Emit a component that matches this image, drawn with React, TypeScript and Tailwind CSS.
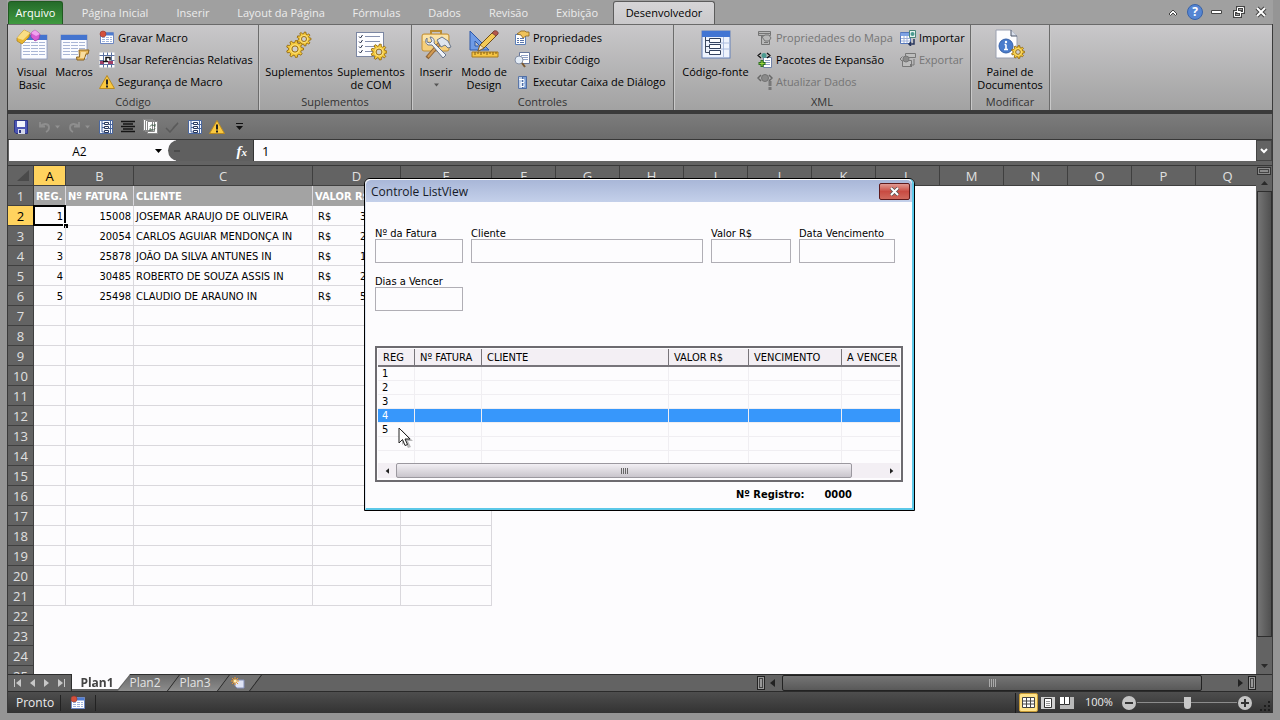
import React from 'react';

interface IconProps {
    className?: string;
}

interface SheetRow {
    reg: string;
    fatura: string;
    cliente: string;
    valor: string;
}

const tabs = [
    { name: 'Página Inicial', width: 'w-24' },
    { name: 'Inserir', width: 'w-[60px]' },
    { name: 'Layout da Página', width: 'w-[116px]' },
    { name: 'Fórmulas', width: 'w-[75px]' },
    { name: 'Dados', width: 'w-[61px]' },
    { name: 'Revisão', width: 'w-[67px]' },
    { name: 'Exibição', width: 'w-[70px]' },
];

const rows: SheetRow[] = [
    { reg: '1', fatura: '15008', cliente: 'JOSEMAR ARAUJO DE OLIVEIRA', valor: '3' },
    { reg: '2', fatura: '20054', cliente: 'CARLOS AGUIAR MENDONÇA IN', valor: '2' },
    { reg: '3', fatura: '25878', cliente: 'JOÃO DA SILVA ANTUNES IN', valor: '1' },
    { reg: '4', fatura: '30485', cliente: 'ROBERTO DE SOUZA ASSIS IN', valor: '2' },
    { reg: '5', fatura: '25498', cliente: 'CLAUDIO DE ARAUNO IN', valor: '5' },
];

const columns = 'ABCDEFGHIJKLMNOPQ'.split('');
const emptyRows = Array.from({ length: 19 }, (_, i) => i + 7);
const listColumns = ['REG', 'Nº FATURA', 'CLIENTE', 'VALOR R$', 'VENCIMENTO', 'A VENCER'];
const listRows = ['1', '2', '3', '4', '5', '', ''];

/* ---------- icons ---------- */

const gearPoints = (cx: number, cy: number, r: number, teeth: number) => {
    const points: string[] = [];
    for (let i = 0; i < teeth; i++) {
        [[-0.3, 0.76], [-0.17, 1], [0.17, 1], [0.3, 0.76]].forEach(([offset, scale]) => {
            const angle = ((i + offset) / teeth) * Math.PI * 2;
            points.push(`${(cx + Math.cos(angle) * r * scale).toFixed(2)},${(cy + Math.sin(angle) * r * scale).toFixed(2)}`);
        });
    }
    return points.join(' ');
};

const Gear = ({ cx, cy, r }: { cx: number; cy: number; r: number }) => (
    <g>
        <polygon points={gearPoints(cx, cy, r, 9)} fill="#f6cb3c" stroke="#94690f" strokeWidth=".9" />
        <circle cx={cx} cy={cy} r={r * 0.5} fill="none" stroke="#fbe287" strokeWidth="1" />
        <circle cx={cx} cy={cy} r={r * 0.36} fill="#d0cfce" stroke="#94690f" strokeWidth=".9" />
    </g>
);

const Window = ({ x, y }: { x: number; y: number }) => (
    <g>
        <rect x={x} y={y} width="26" height="24" fill="#fbfcff" stroke="#8495bd" strokeWidth=".8" />
        <rect x={x} y={y} width="26" height="5" fill="#4474cf" />
        <path d={`M${x + 2} ${y + 7.5}h22M${x + 2} ${y + 10.5}h22M${x + 2} ${y + 13.5}h22M${x + 2} ${y + 16.5}h22M${x + 2} ${y + 19.5}h22`} stroke="#a9b6d6" />
        <path d={`M${x + 9.5} ${y + 6}v16M${x + 17.5} ${y + 6}v16`} stroke="#fbfcff" />
    </g>
);

const VisualBasicIcon = () => (
    <svg width="32" height="32" viewBox="0 0 32 32">
        <Window x={5} y={6} />
        <path d="M1 9 8 1l6 3-1 4-7 7-5-3z" fill="#e8b630" stroke="#a97c18" strokeWidth=".7" />
        <path d="M1 9 8 1l6 3-7 7z" fill="#f9de83" />
        <path d="m15 4 4-3 5 4-1 5-4 2-4-4z" fill="#d65bd4" stroke="#963a9b" strokeWidth=".7" />
        <path d="m15 4 4-3 5 4-4 2z" fill="#f0a2ee" />
    </svg>
);

const MacrosIcon = () => (
    <svg width="32" height="32" viewBox="0 0 32 32">
        <Window x={3} y={6} />
        <path d="M21 21h10l-1 4h-2l-2 6h-7l-.5-3h3z" fill="#e7b85c" stroke="#8d6420" />
        <path d="M23 23h5l-2 6h-4" fill="#f8dda0" />
    </svg>
);

const GearsIcon = () => (
    <svg width="32" height="32" viewBox="0 0 32 32">
        <Gear cx={21} cy={10} r={7} />
        <Gear cx={12} cy={20} r={8.5} />
    </svg>
);

const ComIcon = () => (
    <svg width="32" height="32" viewBox="0 0 32 32">
        <rect x="1.500" y="3.500" width="27" height="24" fill="#fdfdff" stroke="#7b86a2" />
        {[7, 12, 17, 22].map((y) => (
            <g key={y}>
                <path d={`M4 ${y + 0.5}l1.500 1.500 2-3`} fill="none" stroke="#26304a" />
                <path d={`M10 ${y + 0.5}h15`} stroke="#8792b0" />
            </g>
        ))}
        <Gear cx={24} cy={23} r={8} />
    </svg>
);

const ToolboxIcon = () => (
    <svg width="32" height="32" viewBox="0 0 32 32">
        <path d="M11 5V2h10v3" fill="none" stroke="#b98c34" strokeWidth="2" />
        <rect x="2" y="5" width="27" height="17" rx="2" fill="#f6cf7b" stroke="#bf8f3a" />
        <rect x="3" y="6" width="25" height="6" fill="#fbe3a8" />
        <path d="m20 14-13 15" stroke="#8b6236" strokeWidth="4" />
        <path d="m19 15-11 13" stroke="#d29a52" strokeWidth="2" />
        <path d="m17 11 5-3 6 4 3 6-3 1-3-3-4 2z" fill="#dfe5ee" stroke="#6c7789" />
        <path d="M7 9c-2 2-2 5 1 7h4l11 13 3-3-12-12c1-3-1-6-4-6l2 4-2 2-3-1z" fill="#eef2f8" stroke="#68758b" />
    </svg>
);

const DesignIcon = () => (
    <svg width="32" height="32" viewBox="0 0 32 32">
        <path d="M2 2v19h19zM7 12l5 5H7z" fill="#6f9be6" fillRule="evenodd" stroke="#2f58a8" />
        <path d="M4 23h26v5H4z" fill="#f6c544" stroke="#a87a1c" />
        <path d="M7 23v3M10 23v2M13 23v3M16 23v2M19 23v3M22 23v2M25 23v3M28 23v2" stroke="#805a10" />
        <path d="m10 22 2-6L26 2l4 3-14 14z" fill="#f4ca57" stroke="#6f4c17" />
        <path d="m24 4 2-2c2-1 5 1 4 3l-2 2z" fill="#b5564d" stroke="#6d4038" strokeWidth=".8" />
        <path d="m10 22 2-6 4 3z" fill="#f7e6c8" stroke="#6f4c17" strokeWidth=".6" />
    </svg>
);

const SourceIcon = () => (
    <svg width="32" height="32" viewBox="0 0 32 32">
        <rect x="2" y="2" width="28" height="27" fill="#eef3fd" stroke="#6480b8" />
        <rect x="2" y="2" width="28" height="6" fill="#4275d3" />
        <path d="M23.500 8v20M30 14h-9M30 20h-9" stroke="#aebedf" />
        <path d="M5.500 8v15.500H9M5.500 11.500H9M5.500 17.500H9" fill="none" stroke="#3c4960" />
        <path d="M9.500 9.500h11v4h-11zM9.500 15.500h11v4h-11zM9.500 21.500h11v4h-11z" fill="#fff" stroke="#34425e" />
    </svg>
);

const DocumentPanelIcon = () => (
    <svg width="32" height="32" viewBox="0 0 32 32">
        <path d="M2 1h15l6 6v22H2z" fill="#fdfdff" stroke="#9aa0b0" />
        <path d="M17 1v6h6" fill="#d8deea" stroke="#4b5568" />
        <circle cx="12" cy="17" r="7" fill="#4a7ccc" stroke="#3561a9" />
        <path d="M12 15.500v5M10.500 15.500H12M10 20.500h4" stroke="#fff" strokeWidth="1.600" />
        <circle cx="12" cy="13" r="1.200" fill="#fff" />
        <Gear cx={24} cy={23} r={6.5} />
    </svg>
);

const RecordIcon = () => (
    <svg width="16" height="16" viewBox="0 0 16 16">
        <path d="M1.500 2.500h13v11h-13z" fill="#fff" stroke="#6d87c2" />
        <path d="M2 3h12v2.500H2z" fill="#4d7bd0" />
        <path d="M3 7.500h10M3 9.500h10M3 11.500h10" stroke="#9fb3dd" strokeDasharray="3 1" />
        <circle cx="4" cy="4" r="3" fill="#d4503c" stroke="#93382c" strokeWidth=".6" />
    </svg>
);

const RelativeIcon = () => (
    <svg width="16" height="16" viewBox="0 0 16 16">
        <path d="M.5.5h15v15H.5z" fill="#fff" />
        <path d="M.5 3.500h15M.5 12.500h15M4.500.5v15M8.500.5v3M12.500.5v15M8.500 12.500v3M.5 8.500h4M12.500 8.500h3" stroke="#5a70a0" />
        <path d="M1 9h4v3H1zM9 9h5v3H9z" fill="#a04068" />
        <path d="M4 9.500h5M7 9V5.500h4v3" fill="none" stroke="#111" strokeWidth="1.500" />
    </svg>
);

const WarningIcon = () => (
    <svg width="16" height="16" viewBox="0 0 16 16">
        <path d="M8 1.500 15.500 14.500H.5z" fill="#fbc93f" stroke="#b98a22" strokeLinejoin="round" />
        <path d="M8 5.500v5" stroke="#222" strokeWidth="2" />
        <path d="M7 11.500h2v2H7z" fill="#222" />
    </svg>
);

const PropertiesIcon = () => (
    <svg width="16" height="16" viewBox="0 0 16 16">
        <path d="M1.500 4.500h10v10h-10z" fill="#fff" stroke="#5b7fb8" />
        <path d="M3 8.500h2M6 8.500h4M3 10.500h2M6 10.500h4M3 12.500h2M6 12.500h4" stroke="#5b76ab" />
        <path d="m3 4 4-3h4l1 1h3v4h-3l-3 2-2-3z" fill="#efc25a" stroke="#8b6520" strokeWidth=".8" />
    </svg>
);

const ViewCodeIcon = () => (
    <svg width="16" height="16" viewBox="0 0 16 16">
        <path d="M5.500.5h10v11h-10z" fill="#fff" stroke="#68789c" />
        <path d="M7 3.500h7M7 5.500h7M9 7.500h5" stroke="#8fa0c6" />
        <circle cx="5" cy="8" r="4" fill="#e4edf8" stroke="#8690a4" />
        <path d="m8 11 3 4" stroke="#7c5a31" strokeWidth="2" />
    </svg>
);

const RunDialogIcon = () => (
    <svg width="16" height="16" viewBox="0 0 16 16">
        <path d="M4.500 2.500h8v12h-8z" fill="#bfd0ea" stroke="#5a76a8" />
        <path d="M8.500 2.500h4v12h-4z" fill="#7fa0d4" stroke="#4e6da4" />
        <path d="M5 5.500h5v3H7v4h3v-3" fill="none" stroke="#fff" />
    </svg>
);

const MapPropertiesIcon = () => (
    <svg width="16" height="16" viewBox="0 0 16 16" fill="#b8b8b8" stroke="#757575">
        <path d="M1.500 1.500h12v4h-12zM4.500 5.500h8v9h-8z" />
        <path d="m5 7 3-2h4l2 3-2 3H8zM7 12.500h4M1.500 3.500h12" />
    </svg>
);

const ExpansionIcon = () => (
    <svg width="16" height="16" viewBox="0 0 16 16">
        <path d="M6.500 5.500h8v10h-8z" fill="#fff" stroke="#7182a8" />
        <path d="M8 8.500h5M8 10.500h5M8 12.500h5" stroke="#90a0c4" />
        <path d="M4 1 1 3.500 4 6M10 1l3 2.500L10 6" fill="none" stroke="#111" strokeWidth="1.200" />
        <circle cx="7" cy="3.500" r="2.500" fill="#4c9a90" />
        <path d="M5 8v7M1.500 11.500h7" stroke="#2d7022" strokeWidth="3" />
        <path d="M5 9v5M2.500 11.500h5" stroke="#9ed83f" />
    </svg>
);

const RefreshIcon = () => (
    <svg width="16" height="16" viewBox="0 0 16 16">
        <path d="M4 1 1 4l3 3M12 1l3 3-3 3" fill="none" stroke="#686868" strokeWidth="1.500" />
        <circle cx="8" cy="4" r="3.500" fill="#8a8a8a" stroke="#727272" />
        <path d="M13 7v5M13 13v3" stroke="#777" strokeWidth="3" />
    </svg>
);

const ImportIcon = () => (
    <svg width="16" height="16" viewBox="0 0 16 16">
        <path d="M.5 2.500h10v11H.5z" fill="#fff" stroke="#5577bb" />
        <path d="M.5 3h10v3H.5z" fill="#7ea3e4" />
        <path d="M1 8.500h9M1 11h9M4 6v7M7 6v7" stroke="#9eb1da" />
        <path d="M9.500.5h6v7h-6z" fill="#e8f4f0" stroke="#4a8578" />
        <circle cx="12.500" cy="4" r="2" fill="#4c9a90" />
        <path d="M14 9v5H9m2-2-2 2 2 2" fill="none" stroke="#26355c" strokeWidth="1.500" />
    </svg>
);

const ExportIcon = () => (
    <svg width="16" height="16" viewBox="0 0 16 16" fill="#bdbdbd" stroke="#777">
        <path d="M5.500 1.500h10v4h-10zM2.500 8.500h9v6h-9z" />
        <circle cx="6" cy="7" r="3" fill="#8a8a8a" />
        <path d="M2.500 4.500 0 7l2.500 2.500M14 7v6h-4m2-2-2 2 2 2" fill="none" />
    </svg>
);

const StructureIcon = () => (
    <svg width="14" height="14" viewBox="0 0 14 14">
        <path d="M.5.5h13v13H.5z" fill="#f4f7ff" stroke="#4a679e" />
        <path d="M3 1v11h3M3 3.500h3M3 7.500h3M11.500 1v12M10 4.500h3M10 8.500h3" fill="none" stroke="#4a679e" />
        <path d="M5.500 2.500h4v2h-4zM5.500 6.500h4v2h-4zM5.500 10.500h4v2h-4z" fill="#fff" stroke="#26365c" />
    </svg>
);

const SaveIcon = () => (
    <svg width="14" height="14" viewBox="0 0 14 14">
        <path d="M.5.5h13v13H2l-1.500-1.500z" fill="#4c56b4" stroke="#2e3684" />
        <path d="M3 1h8v6H3z" fill="#f2f4fc" />
        <path d="M4 9h7v5H4z" fill="#d5d9ea" />
        <path d="M5 10h2v3H5z" fill="#2e3684" />
    </svg>
);

const UndoIcon = ({ className }: IconProps) => (
    <svg width="13" height="12" viewBox="0 0 13 12" className={className}>
        <path d="M2 1v4.500h5M2 5.500C5 2 11 2 11 6.500c0 2-1 3.500-3 4.500" fill="none" stroke="#8e8e8e" strokeWidth="1.800" />
    </svg>
);

const Caret = ({ className = 'fill-[#222]' }: IconProps) => (
    <svg width="7" height="4" viewBox="0 0 7 4" className={className}>
        <path d="M0 0h7L3.500 4z" />
    </svg>
);

const Arrow = ({ className }: IconProps) => (
    <svg width="6" height="8" viewBox="0 0 6 8" className={className}>
        <path d="M0 0v8l5-4z" />
    </svg>
);

const Cursor = () => (
    <svg width="16" height="22" viewBox="0 0 16 22" className="absolute left-[21px] top-[79px]">
        <path d="m4 3 11 11h-5l3 6-3 1-3-6-3 3z" fill="#0004" />
        <path d="M1 1v15l3.500-3.500L7 18.500l2.500-1L7 12h5z" fill="#fff" stroke="#222" />
    </svg>
);

/* ---------- ribbon ---------- */

interface ButtonProps {
    icon: React.ReactNode;
    children: React.ReactNode;
    className?: string;
    disabled?: boolean;
}

const BigButton = ({ icon, children, className }: ButtonProps) => (
    <button className={`flex shrink-0 flex-col items-center pt-1 text-center leading-[13px] ${className}`}>
        <span className="flex h-9 items-start">{icon}</span>
        {children}
    </button>
);

const SmallButton = ({ icon, children, disabled }: ButtonProps) => (
    <button disabled={disabled} className="flex h-[22px] items-center gap-[3px] whitespace-nowrap disabled:text-[#757575]">
        {icon}
        {children}
    </button>
);

const Group = ({ title, className, children }: { title: string; className: string; children: React.ReactNode }) => (
    <section className={`flex shrink-0 flex-col border-r border-[#6c6c6c] shadow-[1px_0_0_#c9c9c9] ${className}`}>
        <div className="flex flex-1 items-start">{children}</div>
        <h2 className="h-[17px] text-center leading-[17px] text-[#333]">{title}</h2>
    </section>
);

const Ribbon = () => (
    <div className="flex h-[86px] shrink-0 overflow-hidden border-t border-[#6a6a6a] bg-linear-to-b from-[#c9c8ca] to-[#a2a2a2]">
        <Group title="Código" className="w-[251px]">
            <BigButton icon={<VisualBasicIcon />} className="w-12">Visual<br />Basic</BigButton>
            <BigButton icon={<MacrosIcon />} className="w-9">Macros</BigButton>
            <div className="pt-0.5 pl-[7px]">
                <SmallButton icon={<RecordIcon />}>Gravar Macro</SmallButton>
                <SmallButton icon={<RelativeIcon />}>Usar Referências Relativas</SmallButton>
                <SmallButton icon={<WarningIcon />}>Segurança de Macro</SmallButton>
            </div>
        </Group>
        <Group title="Suplementos" className="w-[153px]">
            <BigButton icon={<GearsIcon />} className="w-20">Suplementos</BigButton>
            <BigButton icon={<ComIcon />} className="w-16">Suplementos<br />de COM</BigButton>
        </Group>
        <Group title="Controles" className="w-[262px]">
            <BigButton icon={<ToolboxIcon />} className="w-12">
                Inserir
                <span className="flex h-[13px] items-center"><Caret className="w-[5px] fill-[#555]" /></span>
            </BigButton>
            <BigButton icon={<DesignIcon />} className="w-12">Modo de<br />Design</BigButton>
            <div className="pt-0.5 pl-1.5">
                <SmallButton icon={<PropertiesIcon />}>Propriedades</SmallButton>
                <SmallButton icon={<ViewCodeIcon />}>Exibir Código</SmallButton>
                <SmallButton icon={<RunDialogIcon />}>Executar Caixa de Diálogo</SmallButton>
            </div>
        </Group>
        <Group title="XML" className="w-[297px]">
            <BigButton icon={<SourceIcon />} className="w-[83px]">Código-fonte</BigButton>
            <div className="w-[143px] pt-0.5">
                <SmallButton icon={<MapPropertiesIcon />} disabled>Propriedades do Mapa</SmallButton>
                <SmallButton icon={<ExpansionIcon />}>Pacotes de Expansão</SmallButton>
                <SmallButton icon={<RefreshIcon />} disabled>Atualizar Dados</SmallButton>
            </div>
            <div className="pt-0.5">
                <SmallButton icon={<ImportIcon />}>Importar</SmallButton>
                <SmallButton icon={<ExportIcon />} disabled>Exportar</SmallButton>
            </div>
        </Group>
        <Group title="Modificar" className="w-[79px]">
            <BigButton icon={<DocumentPanelIcon />} className="w-[78px]">Painel de<br />Documentos</BigButton>
        </Group>
    </div>
);

const windowButton = 'flex h-full w-[22px] items-center justify-center';

const TabBar = () => (
    <nav className="flex h-6 shrink-0 items-end bg-[#a0a0a0]">
        <button className="ml-px h-[23px] w-[55px] rounded-t-[3px] border border-b-0 border-[#1f5a20] bg-linear-to-b from-[#256b2a] to-[#3f9a40] text-white">Arquivo</button>
        <div className="ml-1 flex h-full items-center text-[#ececec]">
            {tabs.map((tab) => (
                <button key={tab.name} className={`h-full pt-0.5 whitespace-nowrap ${tab.width}`}>{tab.name}</button>
            ))}
        </div>
        <button className="-mb-px ml-px h-6 w-[102px] rounded-t-[3px] border border-b-0 border-[#5c5c5c] bg-linear-to-b from-[#d6d5d7] to-[#c9c8ca] text-black">Desenvolvedor</button>
        <div className="ml-auto flex h-full items-center pr-px">
            <button aria-label="Minimizar faixa" className={windowButton}>
                <svg width="10" height="8" viewBox="0 0 10 8"><path d="m1 6 4-4 4 4-1.500 1.500L5 5 2.500 7.500z" fill="#fff" stroke="#444" /></svg>
            </button>
            <button aria-label="Ajuda" className={windowButton}>
                <span className="flex size-4 items-center justify-center rounded-full border border-[#3963a8] bg-[#5585d2] text-[12px] font-bold text-white">?</span>
            </button>
            <button aria-label="Minimizar" className={windowButton}>
                <svg width="12" height="5" viewBox="0 0 12 5"><path d="M.5.5h10v3H.5z" fill="#fff" stroke="#444" /></svg>
            </button>
            <button aria-label="Restaurar" className={windowButton}>
                <svg width="12" height="12" viewBox="0 0 12 12" fill="none"><path d="M4.500 1.500h6v5h-6zM1.500 5.500h6v5h-6z" stroke="#444" strokeWidth="3" /><path d="M4.500 1.500h6v5h-6zM1.500 5.500h6v5h-6z" stroke="#fff" /></svg>
            </button>
            <button aria-label="Fechar" className={windowButton}>
                <svg width="12" height="12" viewBox="0 0 12 12"><path d="m2 2 8 8M10 2l-8 8" stroke="#444" strokeWidth="4" /><path d="m2 2 8 8M10 2l-8 8" stroke="#fff" strokeWidth="2" /></svg>
            </button>
        </div>
    </nav>
);

const QuickAccess = () => (
    <div className="flex h-[30px] shrink-0 items-center border-t-4 border-b border-t-[#3b3b3b] border-b-[#383838] bg-linear-to-b from-[#7c7c7c] to-[#6c6c6c] pl-1.5">
        <button aria-label="Salvar" className="w-6"><SaveIcon /></button>
        <button aria-label="Desfazer" className="flex w-[30px] items-center gap-1"><UndoIcon /><Caret className="w-[5px] fill-[#929292]" /></button>
        <button aria-label="Refazer" className="flex w-[31px] items-center gap-1"><UndoIcon className="-scale-x-100" /><Caret className="w-[5px] fill-[#929292]" /></button>
        <button aria-label="Código-fonte" className="w-[22px]"><StructureIcon /></button>
        <button aria-label="Centralizar" className="w-[22px]">
            <svg width="14" height="13" viewBox="0 0 14 13"><path d="M0 1.500h14M2 4h10M0 6.500h14M2 9h10M0 11.500h14" stroke="#151515" strokeWidth="1.300" /></svg>
        </button>
        <button aria-label="Atualizar" className="w-[22px]">
            <svg width="15" height="15" viewBox="0 0 15 15">
                <path d="M.5.5h9v11h-9zM2.500 1.500h9v11h-9zM4.500 2.500h10v12h-10z" fill="#fff" stroke="#888" />
                <path d="M7 7.500c1-2 3-2 5 0V5M12 9.500c-1 2-3 2-5 0V12" fill="none" stroke="#3c5a45" />
            </svg>
        </button>
        <button aria-label="Verificar" className="w-[23px]">
            <svg width="15" height="12" viewBox="0 0 15 12"><path d="m1 7 4 4 8-9M8 7l5-5" fill="none" stroke="#5a5a5a" strokeWidth="1.500" /></svg>
        </button>
        <button aria-label="Estrutura" className="w-[21px]"><StructureIcon /></button>
        <button aria-label="Segurança" className="w-[27px]"><WarningIcon /></button>
        <button aria-label="Personalizar">
            <svg width="7" height="7" viewBox="0 0 7 7"><path d="M0 .5h7" stroke="#111" /><path d="M0 3h7L3.500 7z" fill="#111" /></svg>
        </button>
    </div>
);

const FormulaBar = () => (
    <div className="flex h-[26px] shrink-0 border-b border-[#383838] bg-[#636363] pb-1 pl-px">
        <div className="flex w-[167px] items-center bg-[#fdfcfe] pr-2">
            <input aria-label="Caixa de nome" defaultValue="A2" className="w-[141px] bg-transparent pt-0.5 text-center text-[12px]" />
            <button aria-label="Nomes" className="px-[5px]"><Caret className="fill-black" /></button>
        </div>
        <div className="-ml-2 flex w-[85px] items-center justify-between rounded-l-full bg-[#5f5f5f] pr-1.5 pl-1.5">
            <span className="h-0.5 w-1.5 bg-[#4b4b4b]" />
            <button aria-label="Inserir função" className="font-['Liberation_Serif',serif] text-[15px] leading-4 font-bold italic text-white">
                f<sub className="bottom-0 text-[11px]">x</sub>
            </button>
        </div>
        <input aria-label="Fórmula" defaultValue="1" className="min-w-0 flex-1 border-l border-[#333] bg-[#fdfcfe] px-2 pt-0.5 text-[13px]" />
        <button aria-label="Expandir" className="flex w-4 items-center justify-center border border-[#444]">
            <svg width="8" height="6" viewBox="0 0 8 6"><path d="m1 1 3 3 3-3" fill="none" stroke="#fff" strokeWidth="2" /></svg>
        </button>
    </div>
);

/* ---------- sheet ---------- */

const line = 'border-r border-b border-[#dad8dd]';
const titleCell = 'border-r border-b border-[#dad8dd] border-b-[#a3a3a3] bg-[#a3a3a3] p-0 pt-0.5 pl-0.5 leading-4 whitespace-nowrap';
const rowHead = "border-r border-b border-[#3f3f3f] p-0 pt-px text-center font-['Open_Sans',sans-serif] text-[13px] leading-[18px] font-normal";

const Sheet = () => (
    <table className="w-max table-fixed border-separate border-spacing-0 font-['DejaVu_Sans_Condensed','DejaVu_Sans',sans-serif] text-[11px]">
        <colgroup>
            <col className="w-[26px]" />
            <col className="w-8" />
            <col className="w-[68px]" />
            <col className="w-[179px]" />
            <col className="w-[88px]" />
            <col className="w-[91px]" />
            {columns.slice(5).map((c) => <col key={c} className="w-16" />)}
        </colgroup>
        <thead className="font-['Open_Sans',sans-serif] text-[13px]">
            <tr className="h-5 bg-[#636363] text-[#e0e0e0]">
                <th className="border-r border-b border-[#3f3f3f] p-0">
                    <svg width="12" height="12" viewBox="0 0 12 12" className="mr-1 ml-auto"><path d="M12 0v11H0z" fill="#4a4a4a" /></svg>
                </th>
                {columns.map((c) => (
                    <th key={c} className={`border-r border-b border-[#3f3f3f] p-0 pt-px leading-[18px] font-normal ${c === 'A' ? 'bg-[#ffd35e] text-black' : ''}`}>{c}</th>
                ))}
            </tr>
        </thead>
        <tbody>
            <tr className="h-5 font-bold text-white">
                <th className={`${rowHead} bg-[#636363] text-[#e0e0e0]`}>1</th>
                <td className={titleCell}>REG.</td>
                <td className={titleCell}>Nº FATURA</td>
                <td className={titleCell}>CLIENTE</td>
                <td className={titleCell}>VALOR R$</td>
                <td className={titleCell} />
            </tr>
            {rows.map((row, i) => (
                <tr key={row.reg} className="h-5 leading-4">
                    <th className={`${rowHead} ${i === 0 ? 'bg-[#ffd35e] text-black' : 'bg-[#636363] text-[#e0e0e0]'}`}>{i + 2}</th>
                    <td className={`${line} relative p-0 pt-0.5 pr-0.5 text-right`}>
                        {row.reg}
                        {i === 0 && (
                            <span className="absolute -inset-px border-2 border-black">
                                <span className="absolute -right-1 -bottom-1 size-[5px] border-t border-l border-white bg-black" />
                            </span>
                        )}
                    </td>
                    <td className={`${line} p-0 pt-0.5 pr-0.5 text-right`}>{row.fatura}</td>
                    <td className={`${line} p-0 pt-0.5 pl-0.5 whitespace-nowrap`}>{row.cliente}</td>
                    <td className={`${line} p-0 pt-0.5 pl-[5px]`}>
                        <span className="inline-block w-[42px]">R$</span>{row.valor}
                    </td>
                    <td className={line} />
                </tr>
            ))}
            {emptyRows.map((n) => (
                <tr key={n} className="h-5">
                    <th className={`${rowHead} bg-[#636363] text-[#e0e0e0]`}>{n}</th>
                    {n < 22 && columns.slice(0, 5).map((c) => <td key={c} className={line} />)}
                </tr>
            ))}
        </tbody>
    </table>
);

const VerticalScroll = () => (
    <div className="flex w-4 shrink-0 flex-col items-center bg-[#636363]">
        <span className="mt-px h-2 w-3.5 border border-[#333] bg-[#8b8b8b] p-px"><span className="block h-full border border-[#444]" /></span>
        <button aria-label="Rolar para cima" className="flex h-4 items-center">
            <Caret className="w-[9px] -scale-y-100 fill-[#2a2a2a]" />
        </button>
        <div className="w-[15px] flex-1 border border-[#2e2e2e] bg-linear-to-r from-[#757575] to-[#505050]" />
        <button aria-label="Rolar para baixo" className="flex h-[37px] items-end pb-1.5">
            <Caret className="w-[9px] fill-[#2a2a2a]" />
        </button>
    </div>
);

const SheetTab = ({ name }: { name: string }) => (
    <button className="relative w-[50px] pr-2 text-[#e4e4e4]">
        <span className="absolute inset-0 -skew-x-[37deg] border-r border-[#222] bg-linear-to-b from-[#6a6a6a] to-[#8d8d8d]" />
        <span className="relative">{name}</span>
    </button>
);

const SheetTabs = () => (
    <div className="flex h-[17px] shrink-0 border-t border-[#2e2e2e] bg-[#636363] text-[12px] leading-4">
        <div className="flex w-16 items-center justify-around border-r border-[#2e2e2e] px-0.5">
            <button aria-label="Primeira" className="flex"><i className="h-2 w-px bg-[#c8c8c8]" /><Arrow className="-scale-x-100 fill-[#c8c8c8]" /></button>
            <button aria-label="Anterior"><Arrow className="-scale-x-100 fill-[#c8c8c8]" /></button>
            <button aria-label="Próxima"><Arrow className="fill-[#c8c8c8]" /></button>
            <button aria-label="Última" className="flex"><Arrow className="fill-[#c8c8c8]" /><i className="h-2 w-px bg-[#c8c8c8]" /></button>
        </div>
        <div className="flex min-w-0 flex-1">
            <button className="relative z-10 w-[52px] pr-0.5 font-bold text-[#444]">
                <span className="absolute -top-px -right-1.5 bottom-0.5 left-0 bg-[#fdfcfe] [clip-path:polygon(0_0,100%_0,calc(100%-12px)_100%,0_100%)]" />
                <span className="relative">Plan1</span>
            </button>
            <SheetTab name="Plan2" />
            <SheetTab name="Plan3" />
            <button aria-label="Inserir planilha" className="relative flex w-8 items-center justify-center pr-1">
                <span className="absolute inset-0 -skew-x-[37deg] border-r border-[#222] bg-[#727272]" />
                <svg width="14" height="12" viewBox="0 0 14 12" className="relative">
                    <path d="M4 3h9v8H6l-2-2z" fill="#dfe4f5" stroke="#8590b8" />
                    <path d="M4 0v8M0 4h8M1 1l6 6M7 1 1 7" stroke="#f09a2c" />
                    <circle cx="4" cy="4" r="1.500" fill="#fff0b0" />
                </svg>
            </button>
        </div>
        <div className="flex w-[515px] shrink-0 items-center">
            <span className="mr-1 h-3.5 w-2 border border-[#222] bg-[#999] p-px"><span className="block h-full border border-[#444]" /></span>
            <button aria-label="Rolar para a esquerda" className="w-[13px]"><Arrow className="-scale-x-100 fill-[#222]" /></button>
            <div className="flex h-full flex-1 items-center justify-center gap-px rounded-[2px] border border-[#222] bg-linear-to-b from-[#757575] to-[#595959]">
                {[1, 2, 3, 4].map((n) => <i key={n} className="h-2 w-px bg-[#aaa]" />)}
            </div>
            <button aria-label="Rolar para a direita" className="flex w-[46px] justify-end pr-1"><Arrow className="fill-[#222]" /></button>
            <span className="h-3.5 w-2 border border-[#222] bg-[#999] p-px"><span className="block h-full border border-[#444]" /></span>
            <span className="w-4" />
        </div>
    </div>
);

const StatusBar = () => (
    <footer className="flex h-[22px] shrink-0 items-center border-t border-[#2b2b2b] bg-linear-to-b from-[#4e4e4e] to-[#333] pl-2 text-[#ececec]">
        <span className="w-11 text-[12px]">Pronto</span>
        <button aria-label="Gravar macro" className="border-x border-[#222] px-[9px]"><RecordIcon /></button>
        <div className="ml-auto flex items-center border-l border-[#1c1c1c] pl-[3px]">
            <button aria-label="Normal" className="flex size-[19px] items-center justify-center rounded-[2px] border border-[#c79a34] bg-[#ffe38a]">
                <svg width="13" height="11" viewBox="0 0 13 11"><path d="M.5.5h12v10H.5zM.5 4h12M.5 7h12M4.500 0v11M8.500 0v11" fill="#fff" stroke="#444" /></svg>
            </button>
            <button aria-label="Layout da Página" className="ml-[3px] w-[19px]">
                <svg width="14" height="12" viewBox="0 0 14 12"><path d="M0 0h14v12H0z" fill="#cfcfcf" /><path d="M3.500 1.500h7v9h-7z" fill="#fff" stroke="#333" /><path d="M5 4.500h4M5 6.500h4M5 8.500h4" stroke="#999" /></svg>
            </button>
            <button aria-label="Quebra de Página" className="w-[25px]">
                <svg width="14" height="12" viewBox="0 0 14 12"><path d="M0 0h14v12H0z" fill="#b9b9b9" /><path d="M0 0h4v7H0zM5 0h4v7H5z" fill="#fff" /><path d="M4.500 0v7.500H9.500V0M0 7.500h4" fill="none" stroke="#333" /></svg>
            </button>
            <button className="w-[37px] text-left">100%</button>
            <button aria-label="Reduzir" className="flex size-3.5 items-center justify-center rounded-full bg-[#c4c4c4]"><i className="h-0.5 w-2 bg-[#333]" /></button>
            <input
                type="range"
                aria-label="Zoom"
                defaultValue={50}
                className="mx-px h-3 w-[100px] appearance-none bg-[linear-gradient(#8c8c8c,#8c8c8c)] bg-[length:100%_1px] bg-center bg-no-repeat [&::-webkit-slider-thumb]:h-3 [&::-webkit-slider-thumb]:w-[7px] [&::-webkit-slider-thumb]:appearance-none [&::-webkit-slider-thumb]:rounded-b-[4px] [&::-webkit-slider-thumb]:bg-[#c9c9c9]"
            />
            <button aria-label="Ampliar" className="relative flex size-3.5 items-center justify-center rounded-full bg-[#c4c4c4]">
                <i className="absolute h-0.5 w-2 bg-[#333]" />
                <i className="h-2 w-0.5 bg-[#333]" />
            </button>
            <svg width="20" height="20" viewBox="0 0 20 20" fill="#1d1d1d"><path d="M16 8h2v2h-2zM12 12h2v2h-2zM16 12h2v2h-2zM8 16h2v2H8zM12 16h2v2h-2zM16 16h2v2h-2z" /></svg>
        </div>
    </footer>
);

/* ---------- dialog ---------- */

const Field = ({ label, id, className }: { label: string; id: string; className: string }) => (
    <div className={`flex flex-col ${className}`}>
        <label htmlFor={id} className="h-3 leading-3.5 whitespace-nowrap">{label}</label>
        <input id={id} className="h-6 w-full border border-[#b0aeb5] bg-transparent px-1" />
    </div>
);

const ListView = () => (
    <div className="relative border-2 border-[#6d6b70] bg-[#fdfcfe] p-px pb-0.5">
        <div className="h-[114px] overflow-hidden">
            <table className="w-full table-fixed border-separate border-spacing-0">
                <colgroup>
                    <col className="w-[37px]" />
                    <col className="w-[67px]" />
                    <col className="w-[187px]" />
                    <col className="w-20" />
                    <col className="w-[93px]" />
                    <col />
                </colgroup>
                <thead>
                    <tr className="h-[18px] bg-[#f3eff4]">
                        {listColumns.map((c) => (
                            <th key={c} className="border-r border-b-2 border-[#77747a] p-0 pt-0.5 pl-[5px] text-left leading-3.5 font-normal whitespace-nowrap last:border-r-0">{c}</th>
                        ))}
                    </tr>
                </thead>
                <tbody>
                    {listRows.map((reg, i) => (
                        <tr key={i} className={`h-3.5 leading-3 ${reg === '4' ? 'bg-[#3797fb] text-white' : ''}`}>
                            <td className="border-r border-b border-[#f0eef2] p-0 pt-px pl-1">{reg}</td>
                            {listColumns.slice(1).map((c) => <td key={c} className="border-r border-b border-[#f0eef2] p-0 last:border-r-0" />)}
                        </tr>
                    ))}
                </tbody>
            </table>
        </div>
        <div className="flex h-[15px] items-center bg-[#f3eff4]">
            <button aria-label="Esquerda" className="flex w-[18px] justify-center"><Arrow className="w-1 -scale-x-100 fill-[#222]" /></button>
            <div className="flex h-full flex-1 items-center justify-center gap-px rounded-[2px] border border-[#9b989f] bg-linear-to-b from-[#f2eff4] to-[#c9c5cc]">
                {[1, 2, 3, 4].map((n) => <i key={n} className="h-1.5 w-px bg-[#666]" />)}
            </div>
            <button aria-label="Direita" className="flex w-12 justify-end pr-1.5"><Arrow className="w-1 fill-[#222]" /></button>
        </div>
        <Cursor />
    </div>
);

const ListViewDialog = () => (
    <div
        role="dialog"
        aria-label="Controle ListView"
        className="absolute top-[178px] left-[364px] z-20 w-[551px] rounded-t-[6px] border border-black bg-[#fdfcfe] font-['DejaVu_Sans_Condensed','DejaVu_Sans',sans-serif] text-[11px]"
    >
        <div className="rounded-t-[5px] border-r-2 border-b-2 border-l border-[#5cc8e8] border-l-[#dfe6f2]">
            <header className="flex h-[23px] items-center justify-between rounded-t-[5px] border-t border-white bg-linear-to-b from-[#a9b7d8] to-[#c4d0ea] pr-0.5 pl-[5px]">
                <h1 className="pt-px font-['Open_Sans',sans-serif] text-[12px] text-[#151a28]">Controle ListView</h1>
                <button aria-label="Fechar" className="flex h-[17px] w-[31px] items-center justify-center rounded-[2px] border border-[#5e1a1c] bg-linear-to-b from-[#e09a94] via-[#c94b42] to-[#d0685c]">
                    <svg width="11" height="9" viewBox="0 0 11 9"><path d="m2 1 7 7M9 1 2 8" stroke="#555" strokeWidth="3.500" /><path d="m2 1 7 7M9 1 2 8" stroke="#fff" strokeWidth="2" /></svg>
                </button>
            </header>
            <form className="px-[9px] pt-[25px] pb-[7px]">
                <div className="flex gap-2 pr-2">
                    <Field id="fatura" label="Nº da Fatura" className="w-[88px]" />
                    <Field id="cliente" label="Cliente" className="flex-1" />
                    <Field id="valor" label="Valor R$" className="w-20" />
                    <Field id="vencimento" label="Data Vencimento" className="w-24" />
                </div>
                <div className="mt-3 mb-[35px]">
                    <Field id="dias" label="Dias a Vencer" className="w-[88px]" />
                </div>
                <ListView />
                <p className="mt-[7px] flex justify-end gap-5 pr-[51px] leading-3 font-bold">
                    <span>Nº Registro:</span>
                    <span>0000</span>
                </p>
            </form>
        </div>
    </div>
);

const App = () => {
    return (
        <div className="relative flex h-screen flex-col overflow-hidden border-r-7 border-b-7 border-l-7 border-[#959595] bg-[#959595] font-['Open_Sans','Noto_Sans',sans-serif] text-[11px] text-black">
            <TabBar />
            <div className="flex min-h-0 flex-1 flex-col border-x border-[#3a3a3a]">
                <Ribbon />
                <QuickAccess />
                <FormulaBar />
                <main className="flex min-h-0 flex-1">
                    <div className="min-w-0 flex-1 overflow-hidden bg-[#fdfcfe]">
                        <Sheet />
                    </div>
                    <VerticalScroll />
                </main>
                <SheetTabs />
                <StatusBar />
            </div>
            <div className="fixed inset-0">
                <ListViewDialog />
            </div>
        </div>
    );
};

export default App;
